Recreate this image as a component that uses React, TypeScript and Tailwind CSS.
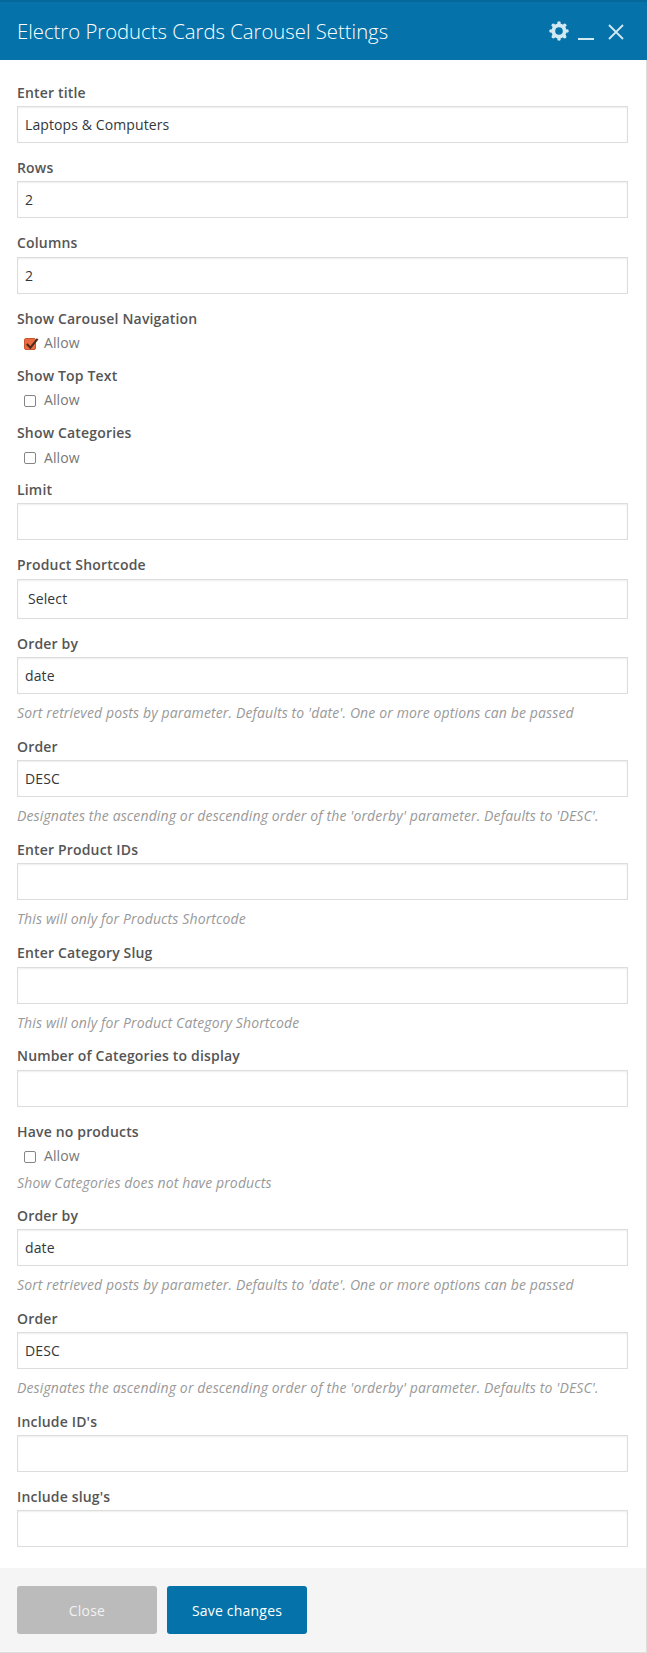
interface FieldProps {
  label: string;
  value?: string;
  help?: string;
}

const labelClass = 'block h-[22.4px] text-[14px] leading-[22.4px] font-semibold tracking-[0.17px] text-[#555]';
const helpClass = 'text-[14px] leading-[22.4px] italic tracking-[0.13px] text-[#999]';

const Field = ({ label, value = '', help }: FieldProps) => (
  <div className="mb-[14.1px]">
    <label className={labelClass}>{label}</label>
    <input
      type="text"
      readOnly
      value={value}
      className="mt-[1.8px] block h-[37px] w-full border border-[#ddd] bg-white px-[7px] text-[14px] tracking-[0.1px] text-[#32373c] shadow-[inset_0_1px_2px_rgba(0,0,0,0.07)] outline-none"
    />
    {help && <p className={`mt-[8px] mb-[-2.6px] ${helpClass}`}>{help}</p>}
  </div>
);

const CheckField = ({ label, checked = false, help }: { label: string; checked?: boolean; help?: string }) => (
  <div className="mb-[10.8px]">
    <label className={labelClass}>{label}</label>
    <div className="mt-[1.6px] flex h-[22.4px] items-center pl-[7px] text-[14px] tracking-[0.1px] text-[#777]">
      {checked ? (
        <span className="relative mr-[8px] mt-[2px] block h-[12px] w-[12px] rounded-[2px] border border-[#c9562f] bg-[#ea6b41]">
          <svg viewBox="0 0 16 16" className="absolute left-[-1px] top-[-3px] h-[15px] w-[15px]">
            <path d="M3 8.5 L6.8 12.5 L14.5 3" fill="none" stroke="#4a2a1c" strokeWidth="2.2" />
          </svg>
        </span>
      ) : (
        <input
          type="checkbox"
          readOnly
          checked={false}
          className="mr-[8px] mt-[2px] block h-[12px] w-[12px] appearance-none rounded-[2px] border border-[#858585] bg-white"
        />
      )}
      Allow
    </div>
    {help && <p className={`mt-[4.5px] mb-[1.5px] ${helpClass}`}>{help}</p>}
  </div>
);

// Roue dentée de l'en-tête
const Gear = () => (
  <svg viewBox="0 0 20 20" className="mr-[9px] h-[20px] w-[20px]" fill="#d2e8f3">
    <circle cx="10" cy="10" r="5.7" fill="none" stroke="#d2e8f3" strokeWidth="3.8" />
    {[0, 45, 90, 135, 180, 225, 270, 315].map((deg) => (
      <circle
        key={deg}
        cx={10 + 8 * Math.cos((deg * Math.PI) / 180)}
        cy={10 + 8 * Math.sin((deg * Math.PI) / 180)}
        r="1.8"
      />
    ))}
  </svg>
);

const sortHelp = "Sort retrieved posts by parameter. Defaults to 'date'. One or more options can be passed";
const orderHelp = "Designates the ascending or descending order of the 'orderby' parameter. Defaults to 'DESC'.";

export default function App() {
  return (
    <div className="h-[1653px] w-[647px] overflow-hidden bg-white font-['Open_Sans',sans-serif]">
      {/* Titre */}
      <div className="flex h-[60px] items-center justify-between border-t-2 border-[#04689a] bg-[#0573aa] pl-[17px] pr-[23px]">
        <h1 className="text-[20.3px] font-light text-white">Electro Products Cards Carousel Settings</h1>
        <div className="flex items-center text-[#d2e8f3]">
          <Gear />
          <span className="mt-[16px] mr-[14px] block h-[2px] w-[16px] bg-[#d2e8f3]" />
          <svg viewBox="0 0 16 16" className="mt-[2px] h-[16px] w-[16px]">
            <path d="M1 1 L15 15 M15 1 L1 15" stroke="currentColor" strokeWidth="1.8" fill="none" />
          </svg>
        </div>
      </div>

      <div className="h-[1593px] border-r border-[#ddd]">
        <div className="h-[1508px] pt-[21.8px] pl-[17px] pr-[18px]">
          <Field label="Enter title" value="Laptops & Computers" />
          <Field label="Rows" value="2" />
          <Field label="Columns" value="2" />
          <CheckField label="Show Carousel Navigation" checked />
          <CheckField label="Show Top Text" />
          <CheckField label="Show Categories" />
          <Field label="Limit" />
          <div className="mb-[14.45px]">
            <label className={labelClass}>Product Shortcode</label>
            <select className="mt-[1.8px] block h-[40px] w-full appearance-none border border-[#ddd] bg-white px-[10px] text-[14px] tracking-[0.1px] text-[#32373c] shadow-[inset_0_1px_2px_rgba(0,0,0,0.07)] outline-none">
              <option>Select</option>
            </select>
          </div>
          <Field label="Order by" value="date" help={sortHelp} />
          <Field label="Order" value="DESC" help={orderHelp} />
          <Field label="Enter Product IDs" help="This will only for Products Shortcode" />
          <Field label="Enter Category Slug" help="This will only for Product Category Shortcode" />
          <Field label="Number of Categories to display" />
          <CheckField label="Have no products" help="Show Categories does not have products" />
          <Field label="Order by" value="date" help={sortHelp} />
          <Field label="Order" value="DESC" help={orderHelp} />
          <Field label="Include ID's" />
          <Field label="Include slug's" />
        </div>

        {/* Pied */}
        <div className="flex h-[85px] items-start gap-[10px] border-b border-[#ddd] bg-[#f5f5f5] pt-[18px] pl-[17px]">
          <button className="h-[48px] w-[140px] rounded-[3px] bg-[#bbb] text-[14px] tracking-[0.2px] text-[#f1f1f1]">Close</button>
          <button className="h-[48px] w-[140px] rounded-[3px] bg-[#0573aa] text-[14px] tracking-[0.2px] text-white">Save changes</button>
        </div>
      </div>
    </div>
  );
}
